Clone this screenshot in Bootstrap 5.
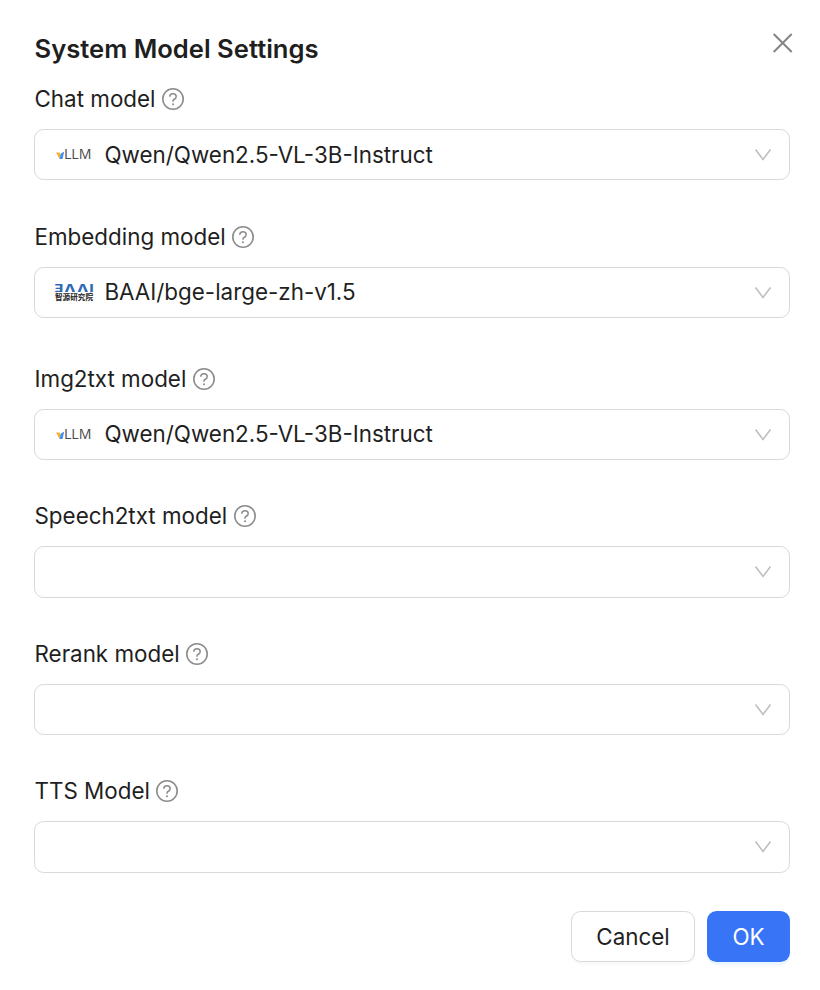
<!DOCTYPE html>
<html lang="en">
<head>
<meta charset="utf-8">
<meta name="viewport" content="width=device-width, initial-scale=1">
<title>System Model Settings</title>
<link href="https://cdn.jsdelivr.net/npm/bootstrap@5.3.0/dist/css/bootstrap.min.css" rel="stylesheet">
<style>
body{font-family:Inter,"Noto Sans CJK SC",sans-serif;font-size:22.4px;line-height:30px;color:#1f1f1f;background:#fff}
.settings{padding:34px 30px 0 34px;height:990px}
.settings-title{font-size:25.6px;line-height:30px;font-weight:600;margin:0;padding-left:.5px}
.close-btn{width:24px;height:24px;margin:-3px -5px 0 0}
.settings-form{margin-top:20px}
.field{margin-bottom:42px}
.field-wide{margin-bottom:46px}
.field-tight{margin-bottom:41px}
.field-label{height:30px;margin-bottom:15px;padding-left:.5px;gap:5.5px}
.select-box{height:51px;border:1px solid #d9d9d9;border-radius:9.6px;padding:0 17.5px 0 19px}
.select-tall{height:52px}
.select-value{margin-left:10.4px}
.value-raised{padding-bottom:1px}
.brand{width:40px;height:26px;margin-bottom:1px}
.action{height:51px;border-radius:9.6px;font-size:22.4px;line-height:30px;padding:1px 0 0}
.action-cancel{width:124px;border:1px solid #d9d9d9;background:#fff;color:#1f1f1f;box-shadow:0 3px 0 rgba(0,0,0,.02)}
.action-ok{width:83px;border:0;background:#3875f6;color:#fff;box-shadow:0 3px 0 rgba(5,145,255,.08)}
.actions{gap:12px;margin-top:-4px}
</style>
</head>
<body>
<svg class="d-none" xmlns="http://www.w3.org/2000/svg">
  <symbol id="help" viewBox="0 0 24 24"><circle cx="12" cy="12" r="10.2" fill="none" stroke="#8c8c8c" stroke-width="1.6"/><path d="M8.800 9.700c0-1.800 1.400-3 3.200-3s3.200 1.200 3.200 2.900c0 1.400-.8 2.200-1.900 2.700-.9.400-1.300.9-1.300 1.700v.8" fill="none" stroke="#8c8c8c" stroke-width="1.500"/><circle cx="12" cy="17.200" r="1" fill="#8c8c8c"/></symbol>
  <symbol id="chevron" viewBox="0 0 18 14"><path d="M1.500 1.500 9 11.500l7.500-10" fill="none" stroke="#bfbfbf" stroke-width="1.600"/></symbol>
  <symbol id="vllm" viewBox="0 0 40 26">
    <path d="M2 11.500h3.800l1 2v4.500h-1.300z" fill="#fbb03b"/><path d="M5.500 18 7 12.500l3.200-2-1.600 7.500z" fill="#3c92fa"/>
    <text x="9.900" y="17.500" font-family="Open Sans, sans-serif" font-size="14" font-weight="400" fill="#484848" textLength="27.600" lengthAdjust="spacingAndGlyphs">LLM</text>
  </symbol>
  <symbol id="baai" viewBox="0 0 40 26">
    <text transform="translate(.5 12.500) scale(1.450 1)" font-family="Inter, sans-serif" font-size="9.800" font-weight="800" fill="#2e69b8" textLength="27" lengthAdjust="spacing">ƎΛΛI</text>
    <text x="1" y="21" font-family="Noto Sans CJK SC, sans-serif" font-size="7.800" font-weight="700" fill="#222" textLength="38" lengthAdjust="spacingAndGlyphs">智源研究院</text>
  </symbol>
</svg>
<main class="settings">
  <header class="d-flex justify-content-between align-items-start">
    <h1 class="settings-title">System Model Settings</h1>
    <button type="button" class="close-btn btn p-0 border-0 d-flex" aria-label="Close"><svg width="24" height="24" viewBox="0 0 24 24"><path d="m2.700 3 18 18M20.700 3l-18 18" stroke="#858585" stroke-width="2"/></svg></button>
  </header>
  <form class="settings-form">
    <div class="field">
      <div class="field-label d-flex align-items-center"><span>Chat model</span><svg width="24" height="24"><use href="#help"/></svg></div>
      <div class="select-box d-flex align-items-center"><svg class="brand"><use href="#vllm"/></svg><span class="select-value">Qwen/Qwen2.5-VL-3B-Instruct</span><svg class="ms-auto" width="18" height="14"><use href="#chevron"/></svg></div>
    </div>
    <div class="field field-wide">
      <div class="field-label d-flex align-items-center"><span>Embedding model</span><svg width="24" height="24"><use href="#help"/></svg></div>
      <div class="select-box d-flex align-items-center"><svg class="brand"><use href="#baai"/></svg><span class="select-value value-raised">BAAI/bge-large-zh-v1.5</span><svg class="ms-auto" width="18" height="14"><use href="#chevron"/></svg></div>
    </div>
    <div class="field field-tight">
      <div class="field-label d-flex align-items-center"><span>Img2txt model</span><svg width="24" height="24"><use href="#help"/></svg></div>
      <div class="select-box d-flex align-items-center"><svg class="brand"><use href="#vllm"/></svg><span class="select-value value-raised">Qwen/Qwen2.5-VL-3B-Instruct</span><svg class="ms-auto" width="18" height="14"><use href="#chevron"/></svg></div>
    </div>
    <div class="field field-tight">
      <div class="field-label d-flex align-items-center"><span>Speech2txt model</span><svg width="24" height="24"><use href="#help"/></svg></div>
      <div class="select-box select-tall d-flex align-items-center"><svg class="ms-auto" width="18" height="14"><use href="#chevron"/></svg></div>
    </div>
    <div class="field field-tight">
      <div class="field-label d-flex align-items-center"><span>Rerank model</span><svg width="24" height="24"><use href="#help"/></svg></div>
      <div class="select-box d-flex align-items-center"><svg class="ms-auto" width="18" height="14"><use href="#chevron"/></svg></div>
    </div>
    <div class="field">
      <div class="field-label d-flex align-items-center"><span>TTS Model</span><svg width="24" height="24"><use href="#help"/></svg></div>
      <div class="select-box select-tall d-flex align-items-center"><svg class="ms-auto" width="18" height="14"><use href="#chevron"/></svg></div>
    </div>
    <div class="actions d-flex justify-content-end">
      <button type="button" class="btn action action-cancel">Cancel</button>
      <button type="button" class="btn btn-primary action action-ok">OK</button>
    </div>
  </form>
</main>
<script src="https://cdn.jsdelivr.net/npm/bootstrap@5.3.0/dist/js/bootstrap.bundle.min.js"></script>
</body>
</html>
